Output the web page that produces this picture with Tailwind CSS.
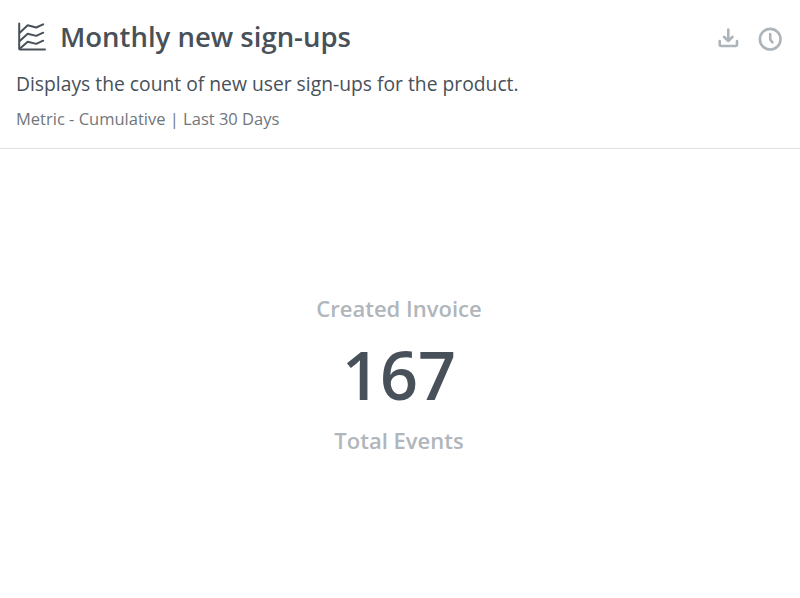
<!DOCTYPE html>
<html lang="en">
<head>
  <meta charset="UTF-8" />
  <meta name="viewport" content="width=device-width, initial-scale=1.0" />
  <title>Monthly new sign-ups</title>
  <script src="https://cdn.jsdelivr.net/npm/@tailwindcss/browser@4"></script>
</head>
<body class="bg-white h-screen flex flex-col overflow-hidden font-['Open_Sans',sans-serif] text-[#485059]">

  <header class="h-[149px] shrink-0 border-b border-[#dfe0e2] px-4 pt-4">
    <div class="flex items-center justify-between h-[42px] pr-0.5">
      <div class="flex items-center gap-[13px]">
        <svg class="w-[30px] h-[30px] ml-px" viewBox="0 0 30 30" fill="none" stroke="currentColor" stroke-width="2" stroke-linecap="round" stroke-linejoin="round">
          <path d="M2.200 1.500v25.200a.8.8 0 0 0 .8.8h25" />
          <path d="M3 10.500l7.700-7.200 8.500 2.200 7-3.200" />
          <path d="M3 18.800l7.700-7.100 8.500 2.200 7-3.200" />
          <path d="M3 26.500l7.700-6.800 8.500 2.200 7-3.200" />
        </svg>
        <h1 class="text-[27.5px] font-semibold whitespace-nowrap">Monthly new sign-ups</h1>
      </div>
      <div class="flex items-center gap-[18px] mt-1 text-[#adb5ba]">
        <svg class="w-6 h-6" viewBox="0 0 24 24" fill="none" stroke="currentColor" stroke-width="2.600" stroke-linecap="round" stroke-linejoin="round">
          <path d="M12.300 2.500v11M8 9.800l4.300 4.200 4.300-4.200M3.700 14v3.500a1.500 1.500 0 0 0 1.500 1.500h14.300a1.500 1.500 0 0 0 1.500-1.500V14" />
        </svg>
        <svg class="w-6 h-6" viewBox="0 0 24 24" fill="none" stroke="currentColor" stroke-width="2.600" stroke-linecap="round" stroke-linejoin="round">
          <circle cx="12.200" cy="12.200" r="10.300" />
          <path d="M12.200 7v5.500l2.300 2.800" />
        </svg>
      </div>
    </div>
    <p class="mt-3 text-[19.3px] leading-7">Displays the count of new user sign-ups for the product.</p>
    <p class="mt-[9px] text-[16.5px] leading-6 text-[#6f767c]">Metric - Cumulative | Last 30 Days</p>
  </header>

  <main class="flex-1 flex flex-col items-center justify-center pr-0.5">
    <p class="text-[22px] leading-8 font-semibold text-[#b0b6bb]">Created Invoice</p>
    <p class="text-[66.5px] leading-[100px] font-semibold">167</p>
    <p class="text-[22px] leading-8 font-semibold text-[#b0b6bb]">Total Events</p>
  </main>

</body>
</html>
